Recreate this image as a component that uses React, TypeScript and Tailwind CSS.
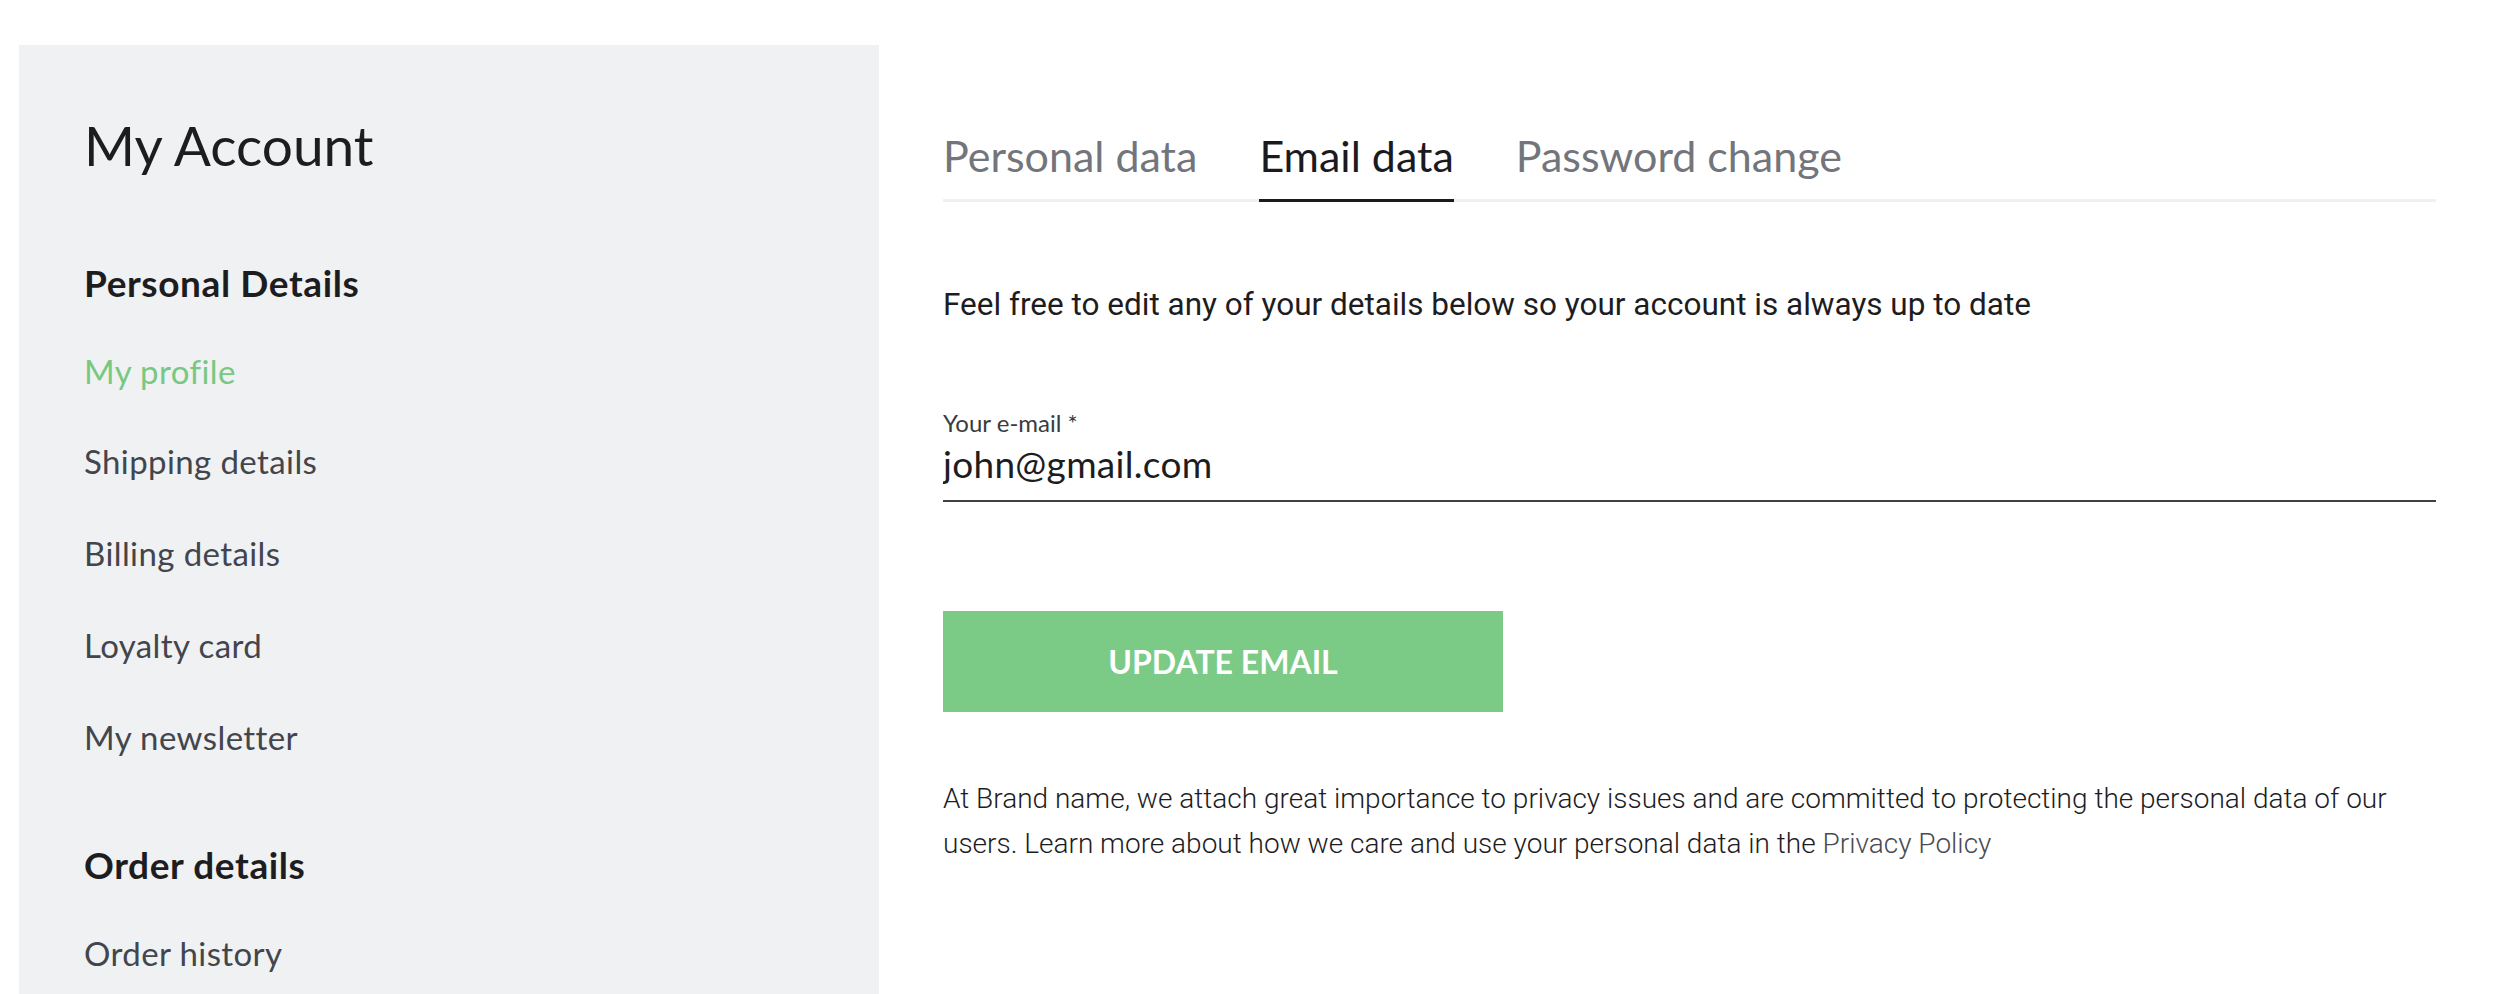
import { ReactElement } from 'react'

const heading = "font-['Lato','Open_Sans',sans-serif]"
const body = "font-['Roboto','Liberation_Sans',sans-serif]"

const personalLinks = ['Shipping details', 'Billing details', 'Loyalty card', 'My newsletter']

const Sidebar = (): ReactElement => (
  <aside className={`w-[860px] min-h-[949px] shrink-0 bg-[#f0f1f3] pl-[65px] pt-[70px] ${heading}`}>
    <h1 className="text-[55px] leading-[60px] text-[#1d1d1f]">My Account</h1>
    <h2 className="mt-[64px] text-[37px] leading-[88px] font-bold tracking-[0.6px] text-[#1d1d1f]">
      Personal Details
    </h2>
    <ul className="text-[33px] tracking-[0.4px] text-[#43454d]">
      <li className="leading-[88px] text-[#78c882]">My profile</li>
      {personalLinks.map((l) => (
        <li className="leading-[92px]" key={l}>
          {l}
        </li>
      ))}
    </ul>
    <h2 className="mt-[38px] text-[37px] leading-[88px] font-bold tracking-[0.6px] text-[#1d1d1f]">
      Order details
    </h2>
    <ul className="text-[33px] tracking-[0.4px] text-[#43454d]">
      <li className="leading-[88px]">Order history</li>
    </ul>
  </aside>
)

const tabs = ['Personal data', 'Email data', 'Password change']

const App = (): ReactElement => {
  const active = 'Email data'

  return (
    <div className="flex min-h-[994px] bg-white pt-[45px] pl-[19px]">
      <Sidebar />
      <main className="ml-[64px] w-[1493px] pt-[87px]">
        <nav className={`flex gap-[62px] border-b-[3px] border-[#f0f0f2] ${heading}`}>
          {tabs.map((t) => (
            <button
              type="button"
              key={t}
              className={`-mb-[3px] pb-[19px] text-[43px] leading-[48px] border-b-[3px] ${
                t === active ? 'border-[#1b1b1f] text-[#1b1b1f]' : 'border-transparent text-[#73757c]'
              }`}
            >
              {t}
            </button>
          ))}
        </nav>

        <p className={`mt-[83px] text-[31.5px] leading-[40px] text-[#1d1d1f] ${body}`}>
          Feel free to edit any of your details below so your account is always up to date
        </p>

        <label className={`mt-[84px] block ${heading}`}>
          <span className="block text-[24px] leading-[28px] text-[#3a3b40]">Your e-mail *</span>
          <input
            type="email"
            defaultValue="john@gmail.com"
            className="mt-[5px] block w-full border-b-2 border-[#3f4046] pb-[14px] text-[37px] leading-[44px] tracking-[0.3px] text-[#1d1d1f] outline-none"
          />
        </label>

        <button
          type="button"
          className={`mt-[109px] h-[101px] w-[560px] bg-[#7bcb86] text-[32px] font-bold text-white ${heading}`}
        >
          UPDATE EMAIL
        </button>

        <p className={`mt-[64px] text-[28px] leading-[45px] font-light text-[#1d1d1f] ${body}`}>
          At Brand name, we attach great importance to privacy issues and are committed to protecting the personal
          data of our users. Learn more about how we care and use your personal data in the{' '}
          <a href="#" className="text-[#4a4b52]">
            Privacy Policy
          </a>
        </p>
      </main>
    </div>
  )
}

export default App
